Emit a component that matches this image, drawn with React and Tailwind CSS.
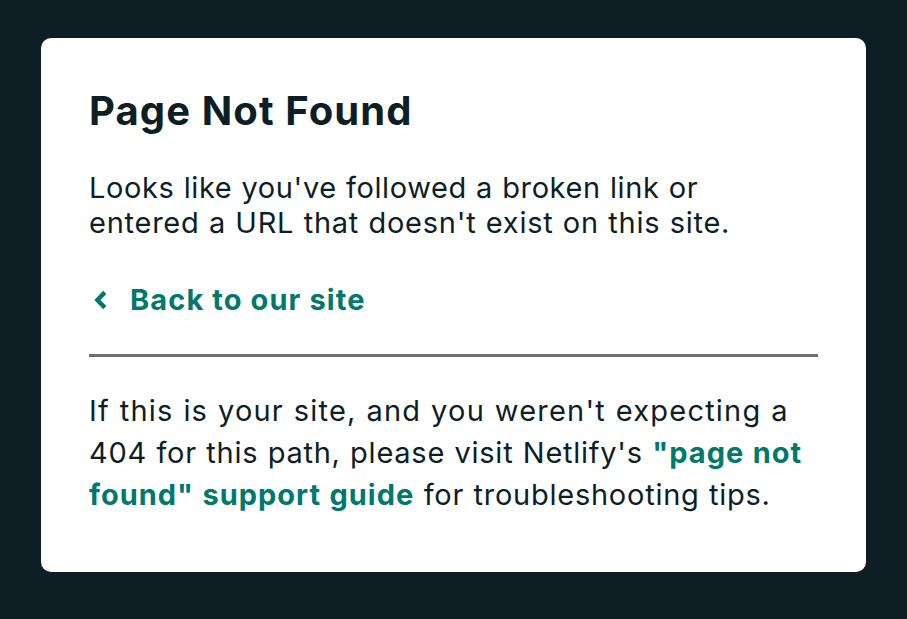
import React from "react";

export default function App() {
  return (
    <div className="min-h-screen w-full bg-[#0e1e25] px-[41px] pt-[38px] pb-[47px] font-['Inter','Noto_Sans',sans-serif] text-[#0e1e25]">
      <main className="rounded-[10px] bg-white px-[48px] pt-[49px] pb-[56px]">
        <h1 className="text-[40px] font-bold leading-[48px] tracking-[1.1px]">Page Not Found</h1>
        <p className="mt-[35px] text-[29px] leading-[35px] tracking-[0.75px] [word-spacing:0.5px]">
          <span className="tracking-[0.6px]">Looks like you've followed a broken link or</span>
          <br />
          entered a URL that doesn't exist on this site.
        </p>
        <a href="#" className="mt-[42px] flex items-center gap-[23px] text-[29px] font-bold leading-[35px] tracking-[1.1px] text-[#00796b]">
          <svg width="13" height="20" viewBox="0 0 13 20" className="ml-[5px] shrink-0">
            <path d="M10.8 2.4 L3.4 10 L10.8 17.6" fill="none" stroke="#00796b" strokeWidth="4.4" strokeLinecap="butt" strokeLinejoin="miter" />
          </svg>
          <span>Back to our site</span>
        </a>
        <hr className="mt-[37px] h-[3px] border-0 bg-[#6e6e6e]" />
        <p className="mt-[33px] text-[29px] leading-[42px] tracking-[0.75px] [word-spacing:0.5px]">
          <span className="tracking-[1.2px]">If this is your site, and you weren't expecting a</span>
          <br />
          404 for this path, please visit Netlify's{" "}
          <a href="#" className="font-bold tracking-[1px] text-[#00796b]">
            "page not
            <br />
            found" support guide
          </a>{" "}
          for troubleshooting tips.
        </p>
      </main>
    </div>
  );
}
